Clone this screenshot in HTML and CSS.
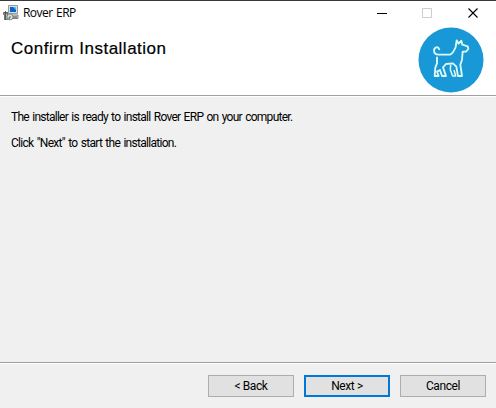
FILE: index.html
```html
<!DOCTYPE html>
<html lang="en">
<head>
<meta charset="utf-8">
<title>Rover ERP</title>
<link rel="stylesheet" href="styles.css">
</head>
<body>
<div class="window">
  <header class="titlebar">
    <svg class="app-icon" viewBox="0 0 16 16">
      <path d="M5.500 .5h9v8h-9z" fill="#d7dde2" stroke="#7c878f" stroke-width=".8"/>
      <path d="M7 2h6v5H7z" fill="#0865c4"/>
      <path d="M10 2h3v3z" fill="#55c1ed"/>
      <path d="M7 10h8v3.500H7z" fill="#e5e5df" stroke="#5d6367" stroke-width=".8"/>
      <path d="M10 12h4" stroke="#30383d"/>
      <path d="M.5 7.500h4v7h-3v-5h-1z" fill="#b7b9b8" stroke="#565a5c" stroke-width=".8"/>
      <path d="M2.500 6v9M1 8h4" stroke="#3e4447" stroke-width=".8"/>
      <circle cx="7" cy="12" r="3" fill="#d6ddd9" stroke="#69756e" stroke-width=".7"/>
      <path d="M5 13l2-1v3z" fill="#36a348"/>
      <circle cx="7" cy="12" r=".7" fill="#555"/>
    </svg>
    <span class="title">Rover ERP</span>
    <svg class="controls" viewBox="0 0 108 24" fill="none">
      <path d="M1 12.500h10" stroke="#000"/>
      <path d="M46.500 7.500h9v9h-9z" stroke="#ccc"/>
      <path d="M92.500 7.500l9 9M101.500 7.500l-9 9" stroke="#000" stroke-width="1.1"/>
    </svg>
  </header>
  <section class="banner">
    <h1>Confirm Installation</h1>
    <svg class="logo" viewBox="0 0 198 198" fill="none">
      <circle cx="99" cy="99" r="97.500" fill="#1998d7"/>
      <path d="M64 67C60 57 49 60 48 70C48 78 54 83 62 83H96C105 80 109 70 113 60L116 40L122 50L130 41L133 53L149 58L151 66L144 74H134L132 98L127 113L132 147H120L115 119L105 109L84 111L75 121L84 147H72L66 129L57 134L62 147H50L52 122L57 109V91" stroke="#dcfaf5" stroke-width="5.500" stroke-linejoin="round" stroke-linecap="round"/>
      <path d="M98 113L97 129L104 147H113L108 129" stroke="#dcfaf5" stroke-width="4.500" stroke-linejoin="round"/>
    </svg>
  </section>
  <main class="content">
    <p class="line-one">The installer is ready to install Rover ERP on your computer.</p>
    <p class="line-two">Click "Next" to start the installation.</p>
  </main>
  <footer class="actions">
    <button>&lt; Back</button>
    <button class="primary">Next &gt;</button>
    <button>Cancel</button>
  </footer>
</div>
</body>
</html>
```
FILE: styles.css
```css
* { box-sizing: border-box; }
body { margin: 0; }
.window {
  width: 496px;
  height: 408px;
  display: flex;
  flex-direction: column;
  background: #f0f0f0;
  border-top: 1px solid #393939;
  color: #000;
  font-family: Roboto, "Liberation Sans", sans-serif;
  font-size: 12px;
}
.titlebar {
  height: 25px;
  padding-left: 3px;
  display: flex;
  background: #fff;
}
.app-icon { width: 16px; height: 16px; margin-top: 4px; }
.title {
  margin-left: 4px;
  font: 12px/24px "Open Sans", "Noto Sans", sans-serif;
  letter-spacing: -.55px;
  word-spacing: 1px;
}
.controls { width: 108px; height: 24px; margin-left: auto; margin-right: 12px; }
.banner {
  height: 70px;
  padding-left: 11px;
  padding-right: 12px;
  display: flex;
  justify-content: space-between;
  background: #fff;
  border-bottom: 1px solid #a0a0a0;
}
h1 {
  margin: 13px 0 0;
  font: 400 17px/20px "Liberation Sans", Arial, sans-serif;
  letter-spacing: .5px;
  -webkit-text-stroke: .2px #000;
}
.logo { width: 66px; height: 66px; margin-top: 1px; }
.content { flex: 1; padding: 12px 11px; border-top: 1px solid #fff; }
p { margin: 0 0 10px; line-height: 16px; white-space: nowrap; }
.line-one { letter-spacing: -.73px; word-spacing: 1px; }
.line-two { letter-spacing: -.71px; word-spacing: 1px; }
.actions {
  height: 46px;
  padding: 11px 10px 0;
  display: flex;
  justify-content: flex-end;
  gap: 10px;
  border-top: 1px solid #a0a0a0;
  box-shadow: inset 0 1px #fff;
}
button {
  width: 86px;
  height: 22px;
  margin-top: 1px;
  padding: 0;
  border: 1px solid #adadad;
  background: #e1e1e1;
  color: #000;
  font: 12px/18px Roboto, "Liberation Sans", sans-serif;
  letter-spacing: -.4px;
}
.primary { border: 2px solid #0078d7; }
```
